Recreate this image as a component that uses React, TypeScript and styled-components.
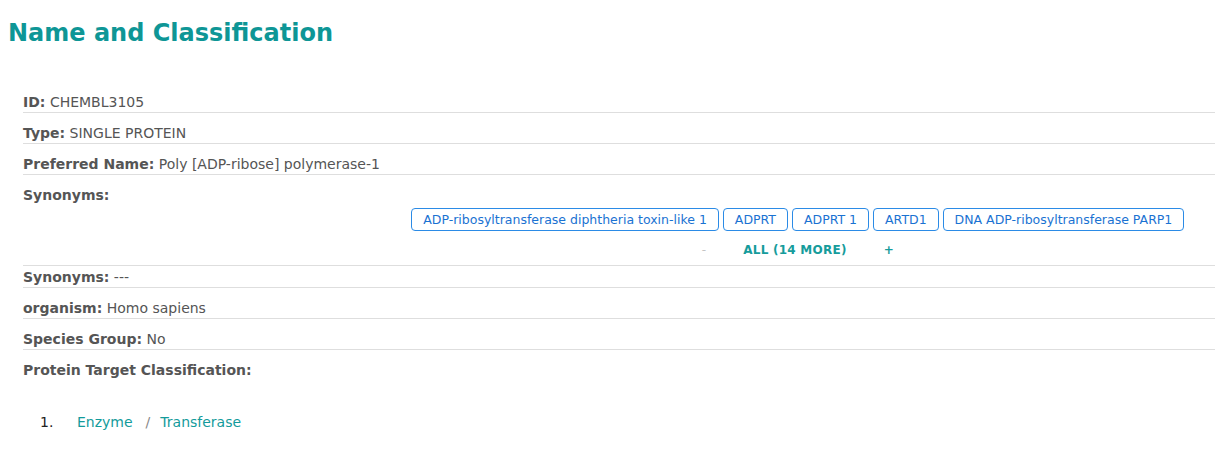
import React from "react";
import styled, { createGlobalStyle } from "styled-components";

const Global = createGlobalStyle`
  html, body { margin: 0; padding: 0; background: #fff; }
  body { font-family: "DejaVu Sans", Verdana, sans-serif; color: #555; }
`;

const Page = styled.div`
  padding: 0 2px 0 8px;
`;

const Title = styled.h2`
  margin: 18px 0 0;
  font-size: 24px;
  line-height: 30px;
  font-weight: bold;
  color: #0e9696;
`;

const Rows = styled.div`
  margin-top: 34px;
  padding-left: 15px;
`;

const Row = styled.div<{ $last?: boolean; $tight?: boolean }>`
  padding: ${(p) => (p.$tight ? "1px 0 0" : "10px 0 0")};
  font-size: 14px;
  line-height: 20px;
  color: #555;
  border-bottom: ${(p) => (p.$last ? "none" : "1px solid #dedede")};
`;

const Label = styled.b`
  font-weight: bold;
  color: #555;
`;

const SynonymBody = styled.div`
  margin-left: 30%;
  display: flex;
  flex-direction: column;
  align-items: center;
  padding: 3px 0 6px;
`;

const Chips = styled.div`
  display: flex;
  gap: 4px;
  justify-content: center;
`;

const Chip = styled.span`
  display: inline-flex;
  align-items: center;
  height: 21px;
  padding: 0 11px;
  border: 1px solid #2b8be6;
  border-radius: 4px;
  font-size: 12.5px;
  line-height: 21px;
  color: #1a72d2;
`;

const Controls = styled.div`
  display: flex;
  gap: 37px;
  margin-top: 10px;
  font-size: 12px;
  line-height: 18px;
  letter-spacing: 0.25px;
`;

const Control = styled.span<{ $disabled?: boolean }>`
  color: ${(p) => (p.$disabled ? "#c4c4c4" : "#169c9c")};
  font-weight: ${(p) => (p.$disabled ? "normal" : "bold")};
`;

const List = styled.ol`
  margin: 32px 0 0;
  padding: 0 0 0 32px;
  list-style: none;
  font-size: 14px;
  line-height: 20px;
`;

const Item = styled.li`
  display: flex;
`;

const Num = styled.span`
  width: 37px;
  color: #222;
`;

const Crumb = styled.a`
  color: #139b9b;
  text-decoration: none;
`;

const Sep = styled.span`
  color: #888;
  margin: 0 10px 0 13px;
`;

const synonyms = [
  "ADP-ribosyltransferase diphtheria toxin-like 1",
  "ADPRT",
  "ADPRT 1",
  "ARTD1",
  "DNA ADP-ribosyltransferase PARP1",
];

export default function App() {
  return (
    <Page>
      <Global />
      <Title>Name and Classification</Title>
      <Rows>
        <Row>
          <Label>ID:</Label> CHEMBL3105
        </Row>
        <Row>
          <Label>Type:</Label> SINGLE PROTEIN
        </Row>
        <Row>
          <Label>Preferred Name:</Label> Poly [ADP-ribose] polymerase-1
        </Row>
        <Row>
          <Label>Synonyms:</Label>
          <SynonymBody>
            <Chips>
              {synonyms.map((s) => (
                <Chip key={s}>{s}</Chip>
              ))}
            </Chips>
            <Controls>
              <Control $disabled>-</Control>
              <Control>ALL (14 MORE)</Control>
              <Control>+</Control>
            </Controls>
          </SynonymBody>
        </Row>
        <Row $tight>
          <Label>Synonyms:</Label> ---
        </Row>
        <Row>
          <Label>organism:</Label> Homo sapiens
        </Row>
        <Row>
          <Label>Species Group:</Label> No
        </Row>
        <Row $last>
          <Label>Protein Target Classification:</Label>
        </Row>
      </Rows>
      <List>
        <Item>
          <Num>1.</Num>
          <Crumb href="#">Enzyme</Crumb>
          <Sep>/</Sep>
          <Crumb href="#">Transferase</Crumb>
        </Item>
      </List>
    </Page>
  );
}
